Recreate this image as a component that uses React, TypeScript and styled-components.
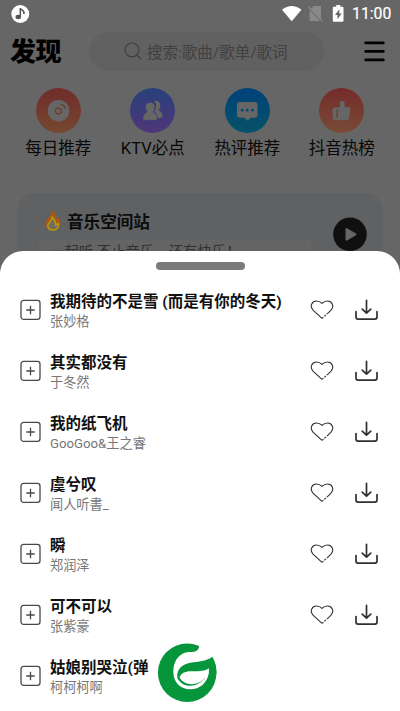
import React from "react";
import styled, { createGlobalStyle } from "styled-components";

const Global = createGlobalStyle`
  * { box-sizing: border-box; }
  body { margin: 0; background: #666; font-family: Roboto, "Noto Sans CJK SC", sans-serif; }
`;
const Screen = styled.main`
  width: 400px; height: 711px; overflow: hidden; display: flex; flex-direction: column; background: #666;
`;
const StatusBar = styled.div`
  height: 28px; flex: none; padding: 0 9px 0 11px; display: flex; align-items: center;
`;
const StatusIcons = styled.div`
  margin-left: auto; display: flex; align-items: center; color: #fff;
`;
const Clock = styled.span`
  width: 39px; margin-left: 8px; font-size: 15.8px; line-height: 28px; font-weight: 400; white-space: nowrap;
  -webkit-text-stroke: 0.2px #fff;
`;
const Header = styled.header`
  height: 46px; flex: none; display: flex; align-items: center; padding: 0 15px 0 10px;
`;
const Brand = styled.h1`
  margin: 2px 0 0; width: 79px; font-size: 26px; line-height: 44px; font-weight: 900; color: #000; letter-spacing: -0.5px;
`;
const Search = styled.div`
  width: 235px; height: 39px; border-radius: 20px; background: #616161; color: #404040;
  display: flex; align-items: center; padding-left: 35px; gap: 5px; font-size: 15.5px; white-space: nowrap;
`;
const MenuIcon = styled.svg`
  margin-left: auto; display: block;
`;
const Shortcuts = styled.nav`
  display: grid; grid-template-columns: repeat(4, 94.5px); padding: 14px 0 0 11px; flex: none; height: 119px;
`;
const Shortcut = styled.div`
  display: flex; flex-direction: column; align-items: center; font-size: 16.5px; line-height: 24px; color: #080808; gap: 4px;
`;
const Disc = styled.div<{ $from: string; $to: string }>`
  width: 45px; height: 45px; border-radius: 50%; display: flex;
  background: linear-gradient(${p => p.$from}, ${p => p.$to});
`;
const Station = styled.section`
  margin: 0 17px; height: 58px; flex: none; border-radius: 18px 18px 0 0; background: #5f6163;
  display: flex; padding: 13px 16px 0 22px; justify-content: space-between;
`;
const StationTitle = styled.div`
  display: flex; align-items: center; gap: 4px; height: 30px; padding-left: 4px;
  font-size: 16.6px; font-weight: 700; color: #0c0c0c;
`;
const StationNote = styled.div`
  margin-top: 4px; width: 272px; height: 15px; background: #646464; color: #303030;
  font-size: 14.4px; line-height: 25px; padding-left: 11px; white-space: nowrap;
`;
const PlayIcon = styled.svg`
  margin-top: 11px; display: block; flex: none; overflow: visible;
`;
const Sheet = styled.section`
  height: 460px; flex: none; background: #fff; border-radius: 23px 23px 0 0; position: relative;
  display: flex; flex-direction: column;
`;
const Handle = styled.div`
  width: 89px; height: 8px; border-radius: 4px; background: #7b7b7b; margin: 11px 0 0 155.5px; flex: none;
`;
const List = styled.div`
  margin-top: 9px;
`;
const Row = styled.div`
  height: 61px; display: flex; align-items: center; padding: 0 22px 0 20px;
`;
const Words = styled.div`
  margin-left: 9px; padding-top: 2px; flex: 1; min-width: 0; white-space: nowrap;
`;
const Song = styled.div`
  font-size: 15.5px; line-height: 22px; font-weight: 700; color: #111;
`;
const Artist = styled.div`
  font-size: 13.2px; line-height: 18px; color: #777;
`;
const Actions = styled.div`
  display: flex; align-items: center; gap: 21px;
`;
const Badge = styled.svg`
  position: absolute; left: 157px; top: 392px;
`;

const songs = [
  ["我期待的不是雪 (而是有你的冬天)", "张妙格"],
  ["其实都没有", "于冬然"],
  ["我的纸飞机", "GooGoo&王之睿"],
  ["虞兮叹", "闻人听書_"],
  ["瞬", "郑润泽"],
  ["可不可以", "张紫豪"],
  ["姑娘别哭泣(弹", "柯柯柯啊"],
];

const NoteIcon = () => (
  <svg width="19" height="19" viewBox="0 0 19 19">
    <circle cx="9.3" cy="9" r="9" fill="#fff" />
    <ellipse cx="7.3" cy="12" rx="2.8" ry="2.2" fill="#555" />
    <path d="M9.3 12V3c.4 2.4 4.4 1.8 3.7 6" fill="none" stroke="#555" strokeWidth="1.5" />
  </svg>
);
const PlusBox = () => (
  <svg width="21" height="22" viewBox="0 0 21 22">
    <rect x="1" y="1.4" width="19" height="19" rx="2.6" fill="none" stroke="#484848" strokeWidth="1.3" />
    <path d="M6.3 11h8.4M10.5 6.8v8.4" stroke="#484848" strokeWidth="1.3" />
  </svg>
);
const Heart = () => (
  <svg width="24" height="22" viewBox="0 0 24 22" fill="none" stroke="#333" strokeWidth="1.1">
    <path d="M12 19.4 3 11.2C-.8 6.8 2.3 2 6.4 2c2.4 0 4.1.8 5.6 2.4C13.5 2.8 15.2 2 17.6 2c4.1 0 7.2 4.8 3.4 9.2l-3 2.9" />
    <path d="m12 19.4 6-5.3" strokeDasharray="2 1.2" />
  </svg>
);
const Download = () => (
  <svg width="23" height="22" viewBox="0 0 23 22" fill="none" stroke="#303030" strokeWidth="1.7" strokeLinecap="round" strokeLinejoin="round">
    <path d="M1 12.6v5.5q0 2 2 2h17q2 0 2-2v-5.5M11.5 1.3v12.5M7.2 10.1l4.3 4.1 4.3-4.1" />
  </svg>
);

export default function App() {
  return (
    <>
      <Global />
      <Screen>
        <StatusBar>
          <NoteIcon />
          <StatusIcons>
            <svg width="62" height="20" viewBox="0 0 62 20">
              <path d="M0 5.7Q9.700-1.8 19.4 5.7L9.700 17.3Z" fill="#fff" />
              <path d="M32 2h7v13.8L28.3 5.2ZM27.6 6.3 38 17H27.6Z" fill="#898989" />
              <path d="M26.5 3 40.5 17.5" stroke="#898989" strokeWidth="1.2" />
              <path d="M54.3 1h4v1.8h2.2q1 0 1 1v13q0 1-1 1h-8.7q-1 0-1-1v-13q0-1 1-1h2.5Z" fill="#fff" />
              <path d="M57.3 5.2 53 10.9h2.5v4.3l4.2-5.7h-2.4Z" fill="#666" />
            </svg>
            <Clock>11:00</Clock>
          </StatusIcons>
        </StatusBar>
        <Header>
          <Brand>发现</Brand>
          <Search>
            <svg width="18" height="18" viewBox="0 0 18 18" fill="none" stroke="#404040" strokeWidth="1.2">
              <circle cx="8" cy="7.9" r="6.9" /><path d="m13 13 4 4" />
            </svg>
            搜索:歌曲/歌单/歌词
          </Search>
          <MenuIcon width="21" height="21" viewBox="0 0 21 21">
            <path d="M1.6 1.9h17.8M1.6 10.4h17.8M1.6 18.9h17.8" stroke="#000" strokeWidth="2.6" strokeLinecap="round" />
          </MenuIcon>
        </Header>
        <Shortcuts>
          <Shortcut>
            <Disc $from="#702c2b" $to="#75482f">
              <svg width="45" height="45" viewBox="0 0 45 45" fill="none">
                <circle cx="22.5" cy="22.7" r="10.8" fill="#666" />
                <circle cx="22.3" cy="23" r="2.9" stroke="#723a2d" strokeWidth="1.3" />
                <path d="M24.6 16.1q4 .7 4.5 4.8" stroke="#723a2d" strokeWidth="1.3" />
              </svg>
            </Disc>每日推荐
          </Shortcut>
          <Shortcut>
            <Disc $from="#28407a" $to="#4f367a">
              <svg width="45" height="45" viewBox="0 0 45 45" fill="#666">
                <path d="M24 13c6-2 8 5 4.7 9 .2 1 4 2 3.8 6q0 2-3 2h-2.3c0-4-1.2-5.2-3-6.5 3-4.5 2.3-8.4-.2-10.5Z" />
                <path d="M20.2 14.3c5.4 0 6.2 6 3.1 9.3.2 1.2 4.2 2 4.2 6.8q0 2-2.3 2H15q-2.3 0-2.3-2c0-4.8 4.2-5.6 4.4-6.8-3.1-3.3-2.3-9.3 3.1-9.3Z" stroke="#403b78" strokeWidth=".8" />
              </svg>
            </Disc>KTV必点
          </Shortcut>
          <Shortcut>
            <Disc $from="#00427b" $to="#065267">
              <svg width="45" height="45" viewBox="0 0 45 45">
                <path d="M15 14h14.5q3 0 3 3v9.7q0 3-3 3h-4l-3 3-3-3H15q-3 0-3-3V17q0-3 3-3Z" fill="#666" />
                <g fill="#034a70"><circle cx="17.2" cy="22.2" r="1.4" /><circle cx="22.3" cy="22.2" r="1.4" /><circle cx="27.4" cy="22.2" r="1.4" /></g>
              </svg>
            </Disc>热评推荐
          </Shortcut>
          <Shortcut>
            <Disc $from="#752c2b" $to="#794a36">
              <svg width="45" height="45" viewBox="0 0 45 45">
                <path d="M21 19.2V15q0-2.3 2.3-2.3t2.3 2.3v4h3.2q3 0 2.6 2.7l-1.3 8q-.4 2.5-2.8 2.5H16q-2.4 0-2.4-2.4v-8q0-2.4 2.4-2.4Z" fill="#666" />
                <path d="M18.2 22v7.5" stroke="#763d32" strokeWidth="1.5" strokeLinecap="round" />
              </svg>
            </Disc>抖音热榜
          </Shortcut>
        </Shortcuts>
        <Station>
          <div>
            <StationTitle>
              <svg width="20" height="24" viewBox="0 0 20 24">
                <path d="M9.2 1C10 5 5 8 3.2 12.500c-2 5.500 2 9 6.900 9 5.200 0 8.800-4 7-9.400-.5-1.700-1.600-2.600-1.400-4.600-1.400.6-2 2-2.300 3.400C13.300 6.500 12 3 9.200 1Z" fill="#a85812" />
                <path d="M9.200 8.500c.8 2.5-3.9 4.600-4.300 7.900-.4 3 2.200 4.600 5.200 4.600 3.800 0 6.200-2.600 5-6.600-1 .4-1.600 1-2.200 1.700C12.200 12.500 11.4 10 9.200 8.500Z" fill="#716a60" stroke="#b89908" strokeWidth="1.6" />
              </svg>
              音乐空间站
            </StationTitle>
            <StationNote>一起听 不止音乐，还有快乐！</StationNote>
          </div>
          <PlayIcon width="34" height="34" viewBox="0 0 34 34">
            <circle cx="17" cy="17.3" r="16.8" fill="#101010" />
            <path d="m13.500 12 9 5.300-9 5.300Z" fill="#666" stroke="#666" strokeWidth="2" strokeLinejoin="round" />
          </PlayIcon>
        </Station>
        <Sheet>
          <Handle />
          <List>
            {songs.map(([song, artist], i) => (
              <Row key={song}>
                <PlusBox />
                <Words>
                  <Song>{song}</Song>
                  <Artist>{artist}</Artist>
                </Words>
                {i < 6 && <Actions><Heart /><Download /></Actions>}
              </Row>
            ))}
          </List>
          <Badge width="60" height="60" viewBox="0 0 60 60">
            <circle cx="30.2" cy="29.7" r="29.3" fill="#05963b" />
            <path d="M42.500 0c0 5-1.500 8-5.200 8.700-3.500.5-6.500 0-9.500 1.100C20 12.500 16.300 20 16.300 29c0 10 7 17.300 17 17.300 9.500 0 17-6 18.400-17L60 13V0Z" fill="#fff" />
            <path d="M55.300 13.700c-6.800 5-13.300 4.600-22 6.100C25.500 21.300 19.500 26 20.300 34.700 25 45.500 41 45.500 48.700 34L51.700 29l7.600 2c.4-6.500-1-12.300-4-17.300Z" fill="#05963b" />
            <path d="M22.500 34.500c1.500-4 5-6.200 11.500-6.200 6.500-.1 13 .5 17.900-3 .5 3.500-.5 6.700-3.200 8.700C41 43.500 28 43.500 22.500 34.500Z" fill="#fff" />
            <path d="M48.200 35.200 51.900 27.500Q52 33 48.500 38.500Z" fill="#fff" />
          </Badge>
        </Sheet>
      </Screen>
    </>
  );
}
